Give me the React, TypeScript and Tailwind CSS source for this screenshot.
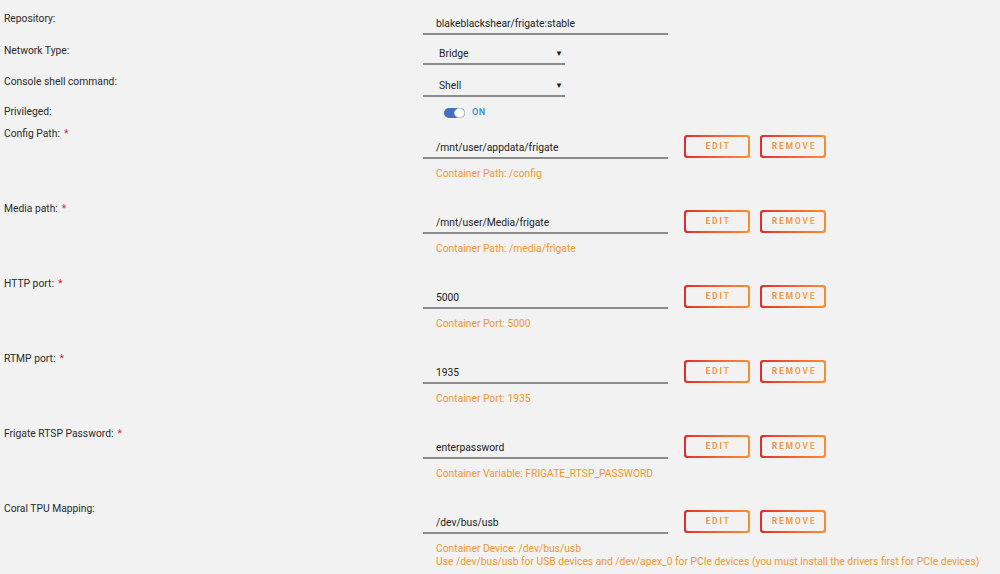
import React from "react";

type PathRow = {
  label: string;
  required?: boolean;
  value: string;
  notes: string[];
};

const pathRows: PathRow[] = [
  { label: "Config Path:", required: true, value: "/mnt/user/appdata/frigate", notes: ["Container Path: /config"] },
  { label: "Media path:", required: true, value: "/mnt/user/Media/frigate", notes: ["Container Path: /media/frigate"] },
  { label: "HTTP port:", required: true, value: "5000", notes: ["Container Port: 5000"] },
  { label: "RTMP port:", required: true, value: "1935", notes: ["Container Port: 1935"] },
  {
    label: "Frigate RTSP Password:",
    required: true,
    value: "enterpassword",
    notes: ["Container Variable: FRIGATE_RTSP_PASSWORD"],
  },
  {
    label: "Coral TPU Mapping:",
    value: "/dev/bus/usb",
    notes: [
      "Container Device: /dev/bus/usb",
      "Use /dev/bus/usb for USB devices and /dev/apex_0 for PCIe devices (you must install the drivers first for PCIe devices)",
    ],
  },
];

function Label({ text, required, pt }: { text: string; required?: boolean; pt: string }) {
  return (
    <div className={`pl-[4px] leading-[14px] text-[#2b2b2b] ${pt}`}>
      {text}
      {required && <span className="ml-[4px] text-[#e0201f]">*</span>}
    </div>
  );
}

function GradientButton({ children }: { children: React.ReactNode }) {
  return (
    <div className="rounded-[3px] bg-gradient-to-r from-[#e22a2a] to-[#ff8c2f] p-[2px]">
      <div className="flex h-[19px] w-[62px] items-center justify-center rounded-[2px] bg-[#f2f2f2] pl-[2px]">
        <span className="bg-gradient-to-r from-[#f08a3c] to-[#f7a048] bg-clip-text text-[8.5px] font-bold tracking-[1.8px] text-transparent">
          {children}
        </span>
      </div>
    </div>
  );
}

function SelectBox({ value }: { value: string }) {
  return (
    <div className="flex h-[22px] w-[142px] items-center justify-between border-b-2 border-[#8c8c8c] pl-[16px] pr-[2px] pt-[1px] text-[#222]">
      <span>{value}</span>
      <span className="text-[8px]">▼</span>
    </div>
  );
}

export default function App() {
  return (
    <div
      className="min-h-[574px] w-[1000px] overflow-hidden bg-[#f2f2f2] pt-[9px] text-[10.3px]"
      style={{ fontFamily: "Roboto, 'Noto Sans', sans-serif" }}
    >
      <div className="grid h-[32px] grid-cols-[423px_1fr]">
        <Label text="Repository:" pt="pt-[3px]" />
        <div className="mt-[3px] flex h-[23px] w-[245px] items-center border-b-2 border-[#8c8c8c] pl-[13px] pt-[2px] text-[#222]">
          blakeblackshear/frigate:stable
        </div>
      </div>

      <div className="grid h-[31px] grid-cols-[423px_1fr]">
        <Label text="Network Type:" pt="pt-[3px]" />
        <div className="mt-[2px]">
          <SelectBox value="Bridge" />
        </div>
      </div>

      <div className="grid h-[30px] grid-cols-[423px_1fr]">
        <Label text="Console shell command:" pt="pt-[3px]" />
        <div className="mt-[3px]">
          <SelectBox value="Shell" />
        </div>
      </div>

      <div className="grid h-[21px] grid-cols-[423px_1fr]">
        <Label text="Privileged:" pt="pt-[3px]" />
        <div className="flex items-center gap-[7px] pl-[21px] pt-[1px]">
          <div className="relative h-[10px] w-[21px] rounded-full bg-[#4570c0]">
            <div className="absolute right-0 top-0 h-[10px] w-[11px] rounded-full border border-[#c8c8c8] bg-white" />
          </div>
          <span className="text-[9px] font-bold tracking-[0.5px] text-[#3d9ad8]">ON</span>
        </div>
      </div>

      {pathRows.map((row) => (
        <div key={row.label} className="grid h-[75px] grid-cols-[423px_1fr]">
          <Label text={row.label} required={row.required} pt="pt-[4px]" />
          <div className="pt-[12px]">
            <div className="flex items-start">
              <div className="mt-[1px] flex h-[23px] w-[245px] items-center border-b-2 border-[#8c8c8c] pl-[13px] pt-[3px] text-[#222]">
                {row.value}
              </div>
              <div className="ml-[16px] flex gap-[10px]">
                <GradientButton>EDIT</GradientButton>
                <GradientButton>REMOVE</GradientButton>
              </div>
            </div>
            <div className="mt-[8px] pl-[13px] leading-[13px] text-[#f0982e]">
              {row.notes.map((n) => (
                <div key={n}>{n}</div>
              ))}
            </div>
          </div>
        </div>
      ))}
    </div>
  );
}
